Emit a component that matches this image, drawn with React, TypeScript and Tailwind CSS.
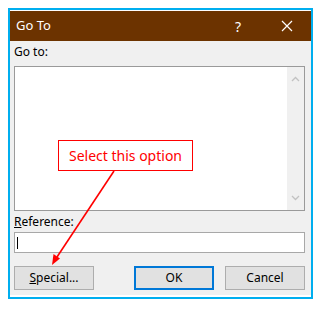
const font = "font-['Segoe_UI','Noto_Sans','Open_Sans',sans-serif]";

function CloseIcon() {
  return (
    <svg width="12" height="12" viewBox="0 0 12 12" fill="none">
      <path d="M1 1 L11 11 M11 1 L1 11" stroke="white" strokeWidth="1.2" />
    </svg>
  );
}

function Chevron({ up }: { up?: boolean }) {
  return (
    <svg width="9" height="6" viewBox="0 0 9 6" fill="none">
      <path d={up ? "M1 5 L4.5 1.5 L8 5" : "M1 1 L4.5 4.5 L8 1"} stroke="#c2c2c2" strokeWidth="1.3" />
    </svg>
  );
}

function Button({ children, isDefault }: { children: React.ReactNode; isDefault?: boolean }) {
  return (
    <div
      className={
        "w-[80px] h-[24px] flex items-center justify-center bg-[#e1e1e1] text-[12px] text-black " +
        (isDefault ? "border-2 border-[#0078d7]" : "border border-[#adadad]")
      }
    >
      {children}
    </div>
  );
}

export default function App() {
  return (
    <div className={"relative w-[325px] h-[309px] bg-white pt-[8px] pl-[8px] " + font}>
      <div className="w-[305px] h-[291px] border-2 border-[#00aeef] bg-white pt-px pb-[2px] flex flex-col">
        {/* title bar */}
        <div className="h-[30px] bg-[#6c3300] flex items-center text-white text-[13px]">
          <span className="flex-1 pl-[6px]">Go To</span>
          <span className="w-[50px] text-center text-[14px]">?</span>
          <span className="w-[48px] flex justify-center">
            <CloseIcon />
          </span>
        </div>

        {/* body */}
        <div className="flex-1 bg-[#f0f0f0] pl-[4px] pr-[6px] pt-[3px] flex flex-col text-black text-[12px]">
          <div className="h-[22px] leading-[16px]">Go to:</div>
          <div className="h-[145px] border border-[#9a9a9a] bg-white flex">
            <div className="flex-1" />
            <div className="w-[17px] bg-[#f0f0f0] flex flex-col items-center justify-between py-[9px]">
              <Chevron up />
              <Chevron />
            </div>
          </div>
          <div className="h-[21px] pt-[3px] leading-[16px]">
            <span className="underline">R</span>eference:
          </div>
          <div className="h-[21px] border border-[#a8a8a8] bg-white flex items-center pl-[2px]">
            <div className="w-px h-[12px] bg-black" />
          </div>
          <div className="flex mt-[13px]">
            <Button>
              <span className="underline">S</span>pecial...
            </Button>
            <div className="flex-1" />
            <Button isDefault>OK</Button>
            <div className="w-[11px]" />
            <Button>Cancel</Button>
          </div>
        </div>
      </div>

      {/* annotation */}
      <div className="absolute left-[58px] top-[140px] w-[135px] h-[31px] border border-[#ff0000] bg-white flex items-center justify-center text-[#ff0000] text-[14px]">
        Select this option
      </div>
      <svg className="absolute left-0 top-0" width="325" height="309" viewBox="0 0 325 309">
        <line x1="114" y1="171" x2="57" y2="257" stroke="#ff0000" strokeWidth="1.6" />
        <path d="M52 265 L53.5 254 L60 258.5 Z" fill="#ff0000" />
      </svg>
    </div>
  );
}
